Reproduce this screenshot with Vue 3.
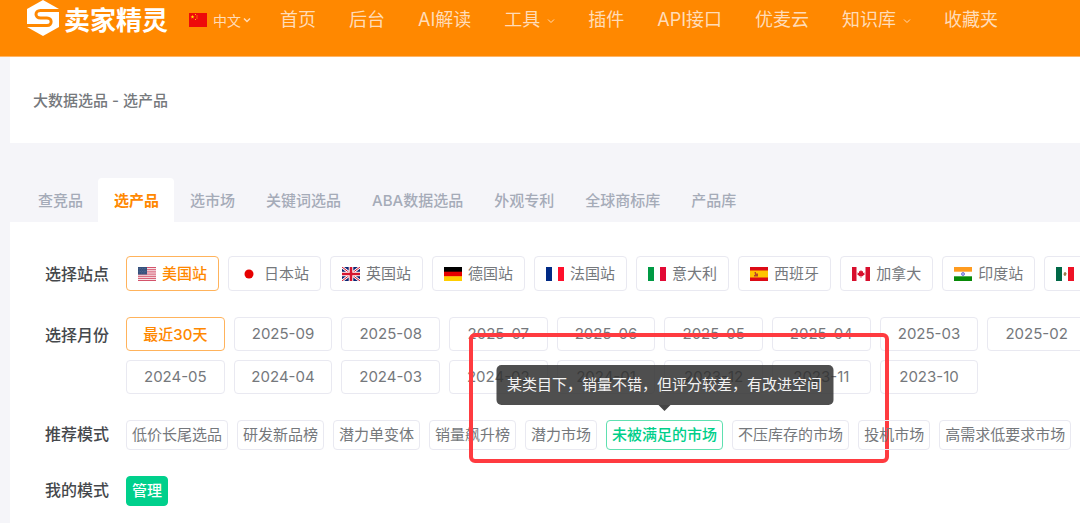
<script setup>
import { ref } from 'vue'

const nav = [
  { text: '首页' },
  { text: '后台' },
  { text: 'AI解读' },
  { text: '工具', more: true },
  { text: '插件' },
  { text: 'API接口' },
  { text: '优麦云' },
  { text: '知识库', more: true },
  { text: '收藏夹' },
]
const tabs = ['查竞品', '选产品', '选市场', '关键词选品', 'ABA数据选品', '外观专利', '全球商标库', '产品库']
const sites = [
  { code: 'us', text: '美国站' },
  { code: 'jp', text: '日本站' },
  { code: 'gb', text: '英国站' },
  { code: 'de', text: '德国站' },
  { code: 'fr', text: '法国站' },
  { code: 'it', text: '意大利' },
  { code: 'es', text: '西班牙' },
  { code: 'ca', text: '加拿大' },
  { code: 'in', text: '印度站' },
  { code: 'mx', text: '墨西哥' },
]
const months = [
  '最近30天', '2025-09', '2025-08', '2025-07', '2025-06', '2025-05', '2025-04', '2025-03', '2025-02',
  '2024-05', '2024-04', '2024-03', '2024-02', '2024-01', '2023-12', '2023-11', '2023-10',
]
const modes = [
  { text: '低价长尾选品' },
  { text: '研发新品榜' },
  { text: '潜力单变体' },
  { text: '销量飙升榜' },
  { text: '潜力市场' },
  { text: '未被满足的市场', tip: '某类目下，销量不错，但评分较差，有改进空间' },
  { text: '不压库存的市场' },
  { text: '投机市场' },
  { text: '高需求低要求市场' },
]
const tab = ref('选产品')
const site = ref('us')
const month = ref('最近30天')
const mode = ref('未被满足的市场')
</script>

<template>
  <div class="page">
    <header class="top">
      <a class="brand" href="#">
        <svg class="logo" viewBox="0 0 32 36" aria-hidden="true">
          <path fill="#fff" d="M16 0 32 9v18L16 36 0 27V9z" />
          <path fill="none" stroke="#ff8800" stroke-width="3" d="M33 10.500H13.500c-6 0-6 7.500 0 7.500H20c5.500 0 5.500 7.500 0 7.500H-1" />
        </svg>
        <span>卖家精灵</span>
      </a>
      <button class="lang" type="button">
        <svg class="cn" viewBox="0 0 18 14" aria-hidden="true">
          <path fill="#ee0a0a" d="M0 0h18v14H0z" />
          <path fill="#ffe000" d="m3.500 1.800.5 1.400h1.500l-1.200.9.4 1.400-1.200-.8-1.200.8.4-1.400-1.200-.9H3z" />
          <path fill="#ffc000" d="M6 1h1v1H6zM7.500 2.500h1v1h-1zM7.500 4.500h1v1h-1zM6 6h1v1H6z" />
        </svg>
        中文
        <svg class="chev" viewBox="0 0 8 8" aria-hidden="true"><path d="M1 2.500 4 5.500 7 2.500" /></svg>
      </button>
      <nav class="nav">
        <a v-for="n in nav" :key="n.text" href="#">
          {{ n.text }}
          <svg v-if="n.more" class="chev" viewBox="0 0 8 8" aria-hidden="true"><path d="M1 3.500 4 6.500 7 3.500" /></svg>
        </a>
      </nav>
    </header>

    <main class="main">
      <div class="crumb">大数据选品 - 选产品</div>

      <div class="tabs">
        <button v-for="t in tabs" :key="t" type="button" :class="{ on: t === tab }" @click="tab = t">{{ t }}</button>
      </div>

      <section class="filters">
        <div class="row">
          <h2 class="label">选择站点</h2>
          <div class="options">
            <button v-for="s in sites" :key="s.code" type="button" class="chip site" :class="{ on: s.code === site }" @click="site = s.code">
              <svg class="flag" viewBox="0 0 18 14" aria-hidden="true">
                <g v-if="s.code === 'us'">
                  <path fill="#f6e4e8" d="M0 0h18v14H0z" />
                  <path stroke="#d4536b" stroke-width="1" d="M0 .5h18M0 2.700h18M0 4.900h18M0 7.100h18M0 9.300h18M0 11.400h18M0 13.500h18" />
                  <path fill="#35507c" d="M0 0h9v7.500H0z" />
                  <path stroke="#6d83a6" stroke-width=".6" stroke-dasharray=".7 1" d="M.7 1.500h8M1.400 3h7M.7 4.500h8M1.400 6h7" />
                </g>
                <circle v-else-if="s.code === 'jp'" cx="9" cy="7" r="4.500" fill="#e60000" />
                <g v-else-if="s.code === 'gb'">
                  <path fill="#0b2472" d="M0 0h18v14H0z" />
                  <path stroke="#fff" stroke-width="2.600" d="m0 0 18 14M18 0 0 14" />
                  <path stroke="#d5152f" stroke-width="1" d="m0 0 18 14M18 0 0 14" />
                  <path stroke="#fff" stroke-width="4.600" d="M9 0v14M0 7h18" />
                  <path stroke="#d5152f" stroke-width="2.600" d="M9 0v14M0 7h18" />
                </g>
                <g v-else-if="s.code === 'de'">
                  <path d="M0 0h18v5H0z" />
                  <path fill="#e60000" d="M0 4.700h18v5H0z" />
                  <path fill="#ffce00" d="M0 9.300h18V14H0z" />
                </g>
                <g v-else-if="s.code === 'fr'">
                  <path fill="#002a85" d="M0 0h6v14H0z" />
                  <path fill="#ff0f2b" d="M12 0h6v14h-6z" />
                </g>
                <g v-else-if="s.code === 'it'">
                  <path fill="#009a44" d="M0 0h6v14H0z" />
                  <path fill="#e20a35" d="M12 0h6v14h-6z" />
                </g>
                <g v-else-if="s.code === 'es'">
                  <path fill="#dc0a15" d="M0 0h18v14H0z" />
                  <path fill="#ffc400" d="M0 3.500h18v7H0z" />
                  <path fill="#b5452b" d="M4.500 5h1.500v1.500H8V9.500H4V8h1z" />
                </g>
                <g v-else-if="s.code === 'ca'">
                  <path fill="#d80f2d" d="M0 0h4.500v14H0zM13.500 0H18v14h-4.500zM9 3l1 1.500 1-.4v2l1.600-.6-.3 1.200.6.5-2.500 2H9.300V11h-.6V9.200H7.600l-2.500-2 .6-.5-.3-1.200 1.600.6v-2l1 .4z" />
                </g>
                <g v-else-if="s.code === 'in'">
                  <path fill="#ff9b1f" d="M0 0h18v4.700H0z" />
                  <path fill="#088a08" d="M0 9.300h18V14H0z" />
                  <circle cx="9" cy="7" r="1.500" fill="#b8b8f0" stroke="#4c4cd0" stroke-width=".7" />
                </g>
                <g v-else>
                  <path fill="#006847" d="M0 0h6v14H0z" />
                  <path fill="#ee1226" d="M12 0h6v14h-6z" />
                  <path fill="#9b7a48" d="M8 5.500 9.500 5l1 1.500-.5 2-1.500.5L7.500 7.500z" />
                </g>
              </svg>
              <span>{{ s.text }}</span>
            </button>
          </div>
        </div>

        <div class="row">
          <h2 class="label">选择月份</h2>
          <div class="months">
            <button v-for="m in months" :key="m" type="button" class="chip month" :class="{ on: m === month }" @click="month = m">{{ m }}</button>
          </div>
        </div>

        <div class="row">
          <h2 class="label short">推荐模式</h2>
          <div class="options">
            <div v-for="m in modes" :key="m.text" class="anchor">
              <button type="button" class="chip mode" :class="{ picked: m.text === mode }" @click="mode = m.text">{{ m.text }}</button>
              <div v-if="m.tip" class="tip" role="tooltip">{{ m.tip }}</div>
              <div v-if="m.tip" class="frame"></div>
            </div>
          </div>
        </div>

        <div class="row">
          <h2 class="label short">我的模式</h2>
          <button type="button" class="chip mode manage">管理</button>
        </div>
      </section>
    </main>
  </div>
</template>

<style>
body {
  background: #f5f5f9;
}
</style>

<style scoped>
.page {
  min-height: 100vh;
  display: flex;
  flex-direction: column;
  overflow: hidden;
  font-family: Inter, "Noto Sans CJK SC", sans-serif;
  font-size: 15px;
  color: #75787c;
}
button {
  font: inherit;
  color: inherit;
  background: none;
  border: 0;
  padding: 0;
  white-space: nowrap;
  cursor: pointer;
}
a {
  color: inherit;
  text-decoration: none;
}
.top {
  display: flex;
  align-items: flex-start;
  height: 56px;
  background: #ff8800;
  border-bottom: 1px solid #ffb566;
  padding-left: 27px;
  color: #ffdcb8;
  white-space: nowrap;
}
.brand {
  display: flex;
  align-items: center;
  gap: 5px;
  height: 36px;
  font-size: 26px;
  font-weight: 700;
  color: #fff;
}
.logo {
  width: 32px;
  height: 36px;
}
.lang {
  display: flex;
  align-items: center;
  height: 40px;
  margin-left: 21px;
  font-size: 14px;
}
.cn {
  width: 18px;
  height: 14px;
  margin-right: 6px;
}
.chev {
  width: 8px;
  height: 8px;
  fill: none;
  stroke: currentColor;
  stroke-width: 1;
}
.lang .chev {
  margin-left: 2px;
  stroke-width: 1.5;
}
.nav {
  display: flex;
  gap: 33px;
  margin-left: 29px;
  font-size: 18px;
  line-height: 40px;
}
.nav a {
  display: flex;
  align-items: center;
  gap: 7px;
}
.main {
  flex: 1;
  display: flex;
  flex-direction: column;
  margin-left: 10px;
}
.crumb {
  padding: 2px 23px 0;
  line-height: 84px;
  font-weight: 500;
  background: #fff;
}
.tabs {
  display: flex;
  padding: 35px 0 0 12px;
  color: #a5abb8;
  font-weight: 500;
}
.tabs button {
  height: 44px;
  padding: 0 15px 2px 16px;
  border-radius: 4px 4px 0 0;
}
.tabs .on {
  background: #fff;
  color: #ff8800;
  font-weight: 700;
}
.filters {
  flex: 1;
  display: flex;
  flex-direction: column;
  gap: 26px;
  padding: 34px 0 18px 35px;
  background: #fff;
}
.row {
  display: flex;
  gap: 17px;
}
.label {
  flex: none;
  margin: 0;
  font-size: 16px;
  font-weight: 500;
  line-height: 36px;
  height: 34px;
  color: #45484c;
}
.label.short {
  line-height: 28px;
  height: 30px;
}
.options {
  display: flex;
  gap: 9px;
}
.months {
  flex: 1;
  display: grid;
  grid-template-columns: repeat(9, 1fr);
  gap: 9px;
  margin-right: -6px;
}
.chip {
  flex: none;
  border: 1px solid #e9e9f1;
  border-radius: 4px;
}
.site {
  display: flex;
  align-items: center;
  gap: 6px;
  height: 35px;
  padding: 0 11px;
}
.site span {
  padding-bottom: 2px;
}
.flag {
  width: 18px;
  height: 14px;
}
.month {
  height: 34px;
  padding-bottom: 2px;
}
.mode {
  height: 30px;
  padding: 0 5px 3px;
}
.chip.on {
  border-color: #ffb35c;
  color: #ff8800;
  font-weight: 500;
}
.chip.picked {
  border-color: #5fe0b0;
  color: #00cf8a;
  font-weight: 500;
}
.chip.manage {
  background: #00d08c;
  border-color: #00d08c;
  color: #fff;
  font-weight: 500;
}
.anchor {
  position: relative;
  flex: none;
}
.tip {
  position: absolute;
  left: 50%;
  bottom: 45px;
  transform: translateX(-50%);
  padding: 0 11px;
  line-height: 40px;
  white-space: nowrap;
  color: #f2f2f2;
  background: rgba(48, 48, 48, 0.85);
  border-radius: 5px;
}
.tip::after {
  content: "";
  position: absolute;
  top: 100%;
  left: 50%;
  margin-left: -6px;
  border: 6px solid transparent;
  border-top-color: #454545;
  border-bottom: 0;
}
.frame {
  position: absolute;
  left: -137px;
  top: -87px;
  width: 412px;
  height: 122px;
  border: 4px solid #ff3b40;
  border-radius: 6px;
  pointer-events: none;
}
</style>
